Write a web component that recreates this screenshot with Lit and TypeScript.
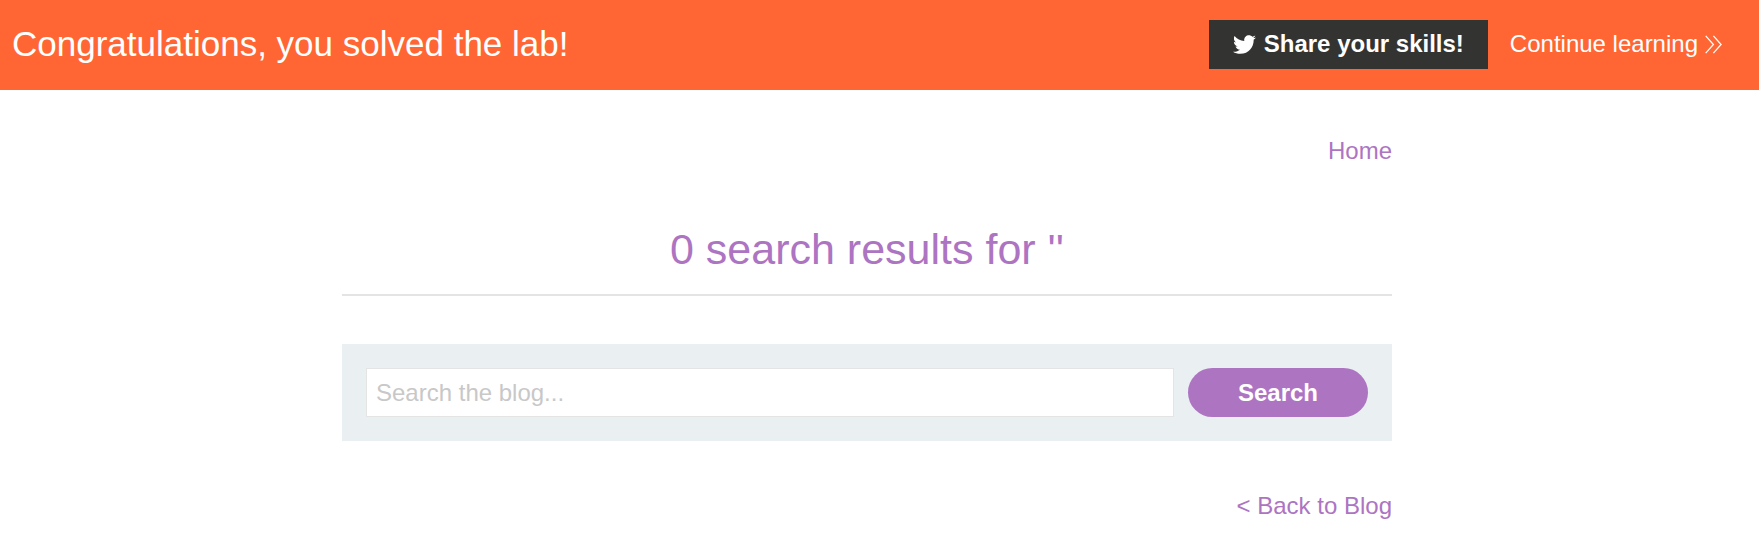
import { LitElement, html, css } from "lit";
import { customElement, state } from "lit/decorators.js";

@customElement("lab-banner")
export class LabBanner extends LitElement {
  static styles = css`
    :host {
      display: block;
      background: #ff6633;
      color: #fff;
    }
    .bar {
      display: flex;
      align-items: center;
      justify-content: space-between;
      box-sizing: border-box;
      min-height: 90px;
      padding: 0 37px 2px 12px;
    }
    .title {
      margin: 0;
      font-size: 35px;
      font-weight: 400;
      line-height: 40px;
    }
    .actions {
      display: flex;
      align-items: center;
      gap: 22px;
    }
    .share {
      display: flex;
      align-items: center;
      gap: 8px;
      height: 49px;
      padding: 0 24px;
      border: 0;
      background: #333332;
      color: #fff;
      font: bold 24px/28px "Liberation Sans", Arial, sans-serif;
      cursor: pointer;
    }
    .bird {
      width: 23px;
      height: 23px;
      fill: #fff;
    }
    .next {
      display: flex;
      align-items: center;
      gap: 7px;
      color: #fff;
      font-size: 24px;
      line-height: 28px;
      text-decoration: none;
    }
    .chevrons {
      width: 17px;
      height: 19px;
      fill: none;
      stroke: #fff;
      stroke-width: 1.3;
    }
  `;

  render() {
    return html`
      <header class="bar">
        <h2 class="title">Congratulations, you solved the lab!</h2>
        <div class="actions">
          <button class="share" type="button">
            <svg class="bird" viewBox="0 0 24 24" aria-hidden="true">
              <path
                d="M23.954 4.569c-.885.389-1.83.654-2.825.775 1.014-.611 1.794-1.574 2.163-2.723-.951.555-2.005.959-3.127 1.184-.896-.959-2.173-1.559-3.591-1.559-2.717 0-4.92 2.203-4.92 4.917 0 .39.045.765.127 1.124C7.691 8.094 4.066 6.13 1.64 3.161c-.427.722-.666 1.561-.666 2.475 0 1.71.87 3.213 2.188 4.096-.807-.026-1.566-.248-2.228-.616v.061c0 2.385 1.693 4.374 3.946 4.827-.413.111-.849.171-1.296.171-.314 0-.615-.03-.916-.086.631 1.953 2.445 3.377 4.604 3.417-1.68 1.319-3.809 2.105-6.102 2.105-.39 0-.779-.023-1.17-.067 2.189 1.394 4.768 2.209 7.557 2.209 9.054 0 13.999-7.496 13.999-13.986 0-.209 0-.42-.015-.63.961-.689 1.8-1.56 2.46-2.548z"
              />
            </svg>
            <span>Share your skills!</span>
          </button>
          <a class="next" href="#continue">
            <span>Continue learning</span>
            <svg class="chevrons" viewBox="0 0 17 19" aria-hidden="true">
              <path d="M.7 .9 8.4 9.5.7 18.1M8.4 .9 16.1 9.5 8.4 18.1" />
            </svg>
          </a>
        </div>
      </header>
    `;
  }
}

@customElement("blog-search")
export class BlogSearch extends LitElement {
  static styles = css`
    :host {
      display: block;
    }
    .form {
      display: flex;
      gap: 14px;
      padding: 24px;
      background: #eaeff2;
    }
    .field {
      flex: 1;
      min-width: 0;
      box-sizing: border-box;
      height: 49px;
      margin: 0;
      padding: 0 9px;
      border: 1px solid #e4e4e4;
      border-radius: 0;
      background: #fff;
      color: #333332;
      font: 24px/28px "Liberation Sans", Arial, sans-serif;
      outline: none;
    }
    .field::placeholder {
      color: #c8c8c8;
      opacity: 1;
    }
    .submit {
      width: 180px;
      height: 49px;
      padding: 0;
      border: 0;
      border-radius: 25px;
      background: #ad74c2;
      color: #fff;
      font: bold 24px/28px "Liberation Sans", Arial, sans-serif;
      cursor: pointer;
    }
  `;

  private submit(event: Event) {
    event.preventDefault();
    const data = new FormData(event.target as HTMLFormElement);
    this.dispatchEvent(
      new CustomEvent("search", { detail: String(data.get("search") ?? "") })
    );
  }

  render() {
    return html`
      <form class="form" role="search" @submit=${this.submit}>
        <input
          class="field"
          type="text"
          name="search"
          placeholder="Search the blog..."
          aria-label="Search the blog"
        />
        <button class="submit" type="submit">Search</button>
      </form>
    `;
  }
}

@customElement("app-root")
export class AppRoot extends LitElement {
  static styles = css`
    :host {
      display: block;
      min-height: 100vh;
      background: #fff;
      font-family: "Liberation Sans", Arial, sans-serif;
      font-size: 24px;
      line-height: 28px;
    }
    .page {
      padding: 47px 25px 0 0;
    }
    .container {
      max-width: 1050px;
      margin: 0 auto;
    }
    .row {
      display: flex;
      justify-content: flex-end;
    }
    .link {
      color: #ad74c2;
      text-decoration: none;
    }
    .results {
      margin-top: 59px;
      padding-bottom: 20px;
      border-bottom: 2px solid #e4e4e4;
      text-align: center;
    }
    .heading {
      margin: 0;
      color: #ad74c2;
      font-size: 43px;
      font-weight: 400;
      line-height: 50px;
    }
    .search {
      margin: 48px 0 51px;
    }
  `;

  @state() private query = "";

  render() {
    return html`
      <lab-banner></lab-banner>
      <main class="page">
        <div class="container">
          <nav class="row"><a class="link" href="#home">Home</a></nav>
          <section class="results">
            <h1 class="heading">0 search results for '${this.query}'</h1>
          </section>
          <blog-search
            class="search"
            @search=${(e: CustomEvent<string>) => (this.query = e.detail)}
          ></blog-search>
          <div class="row"><a class="link" href="#blog">&lt; Back to Blog</a></div>
        </div>
      </main>
    `;
  }
}
